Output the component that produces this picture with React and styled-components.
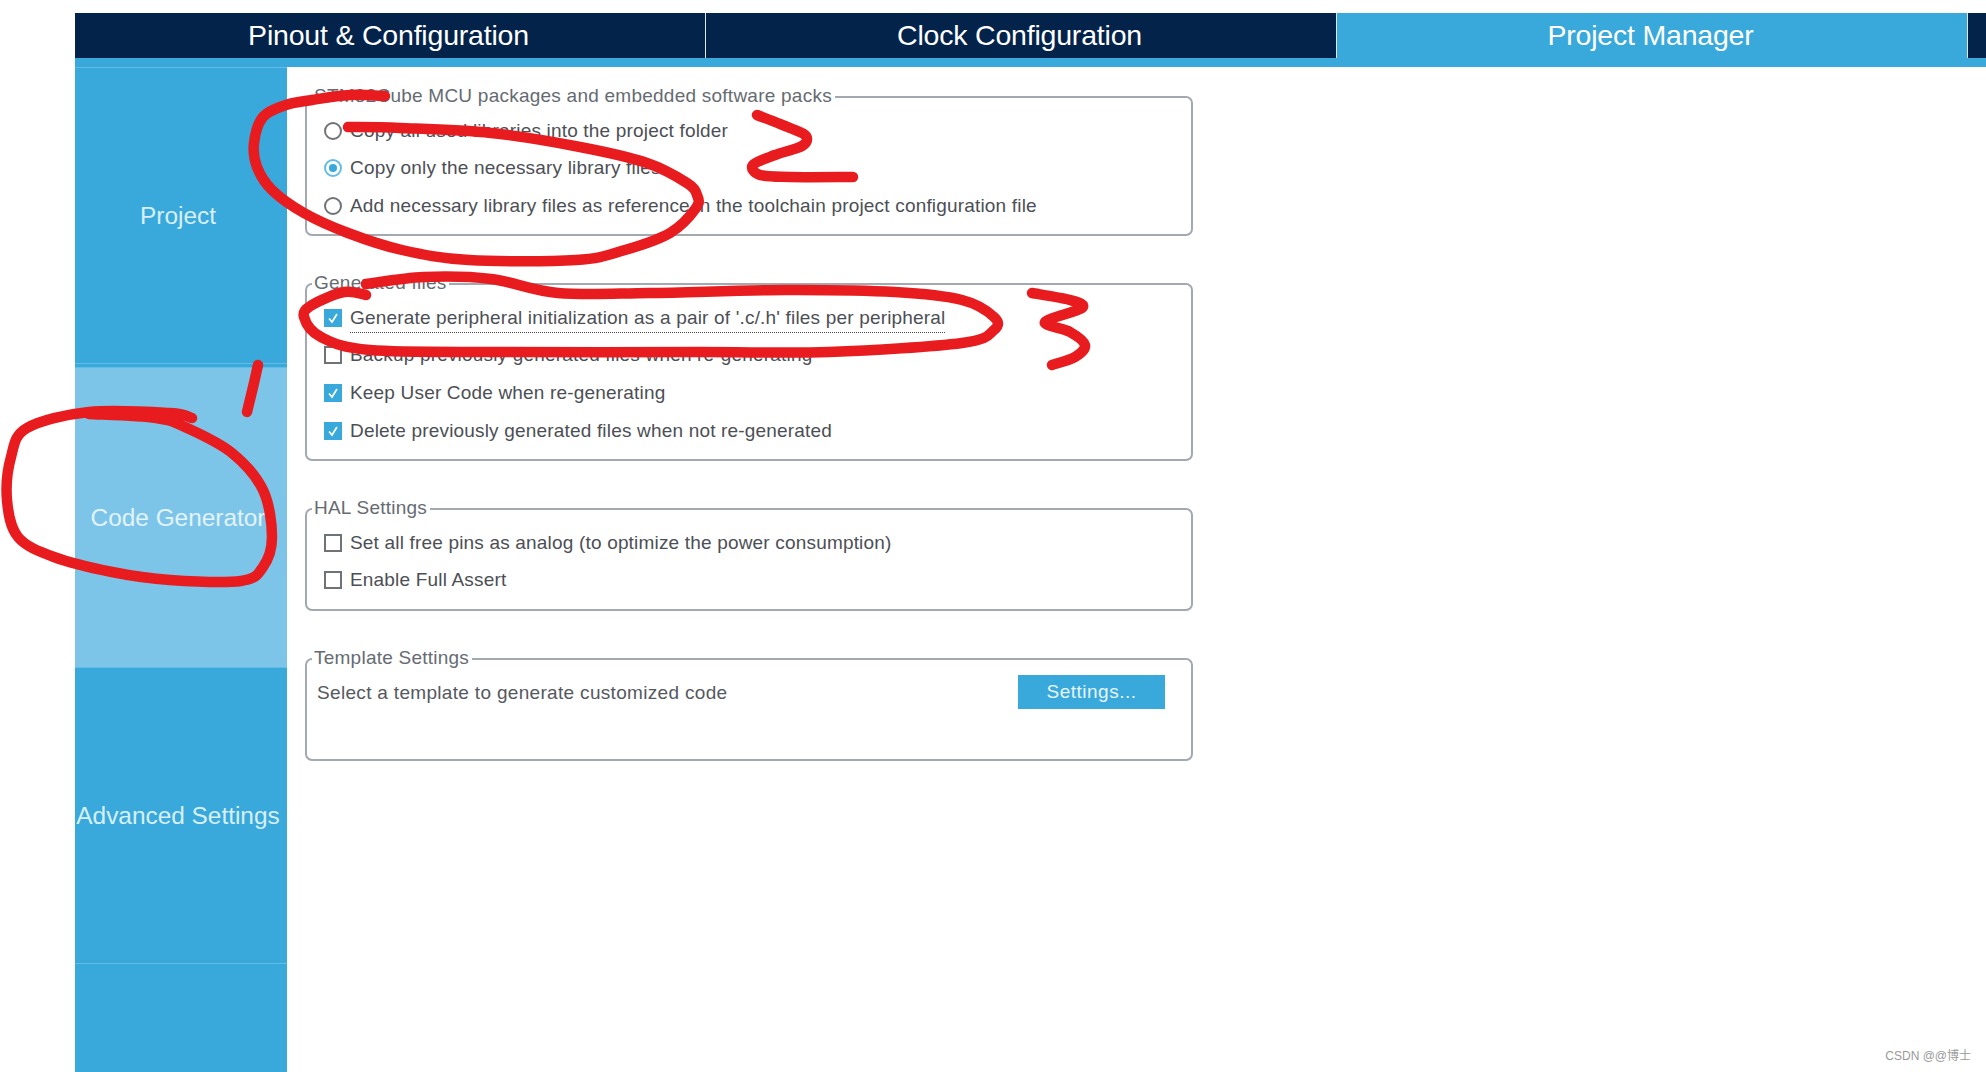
import React from 'react'
import styled, { createGlobalStyle } from 'styled-components'

const GlobalStyle = createGlobalStyle`
  html, body { margin: 0; padding: 0; background: #fff; }
  body { font-family: "Liberation Sans", Arial, sans-serif; }
`

const blue = '#39a9dc'
const navy = '#03234b'

const Page = styled.div`
  position: relative;
  width: 1986px;
  height: 1072px;
  overflow: hidden;
  padding: 13px 0 0 75px;
  box-sizing: border-box;
  background: #fff;
`

const TabBar = styled.div`
  display: flex;
  height: 45px;
  background: ${navy};
`

const Tab = styled.div`
  width: 631px;
  display: flex;
  align-items: center;
  justify-content: center;
  box-sizing: border-box;
  padding-right: 3px;
  border-right: 1px solid #dfe6ee;
  color: #fff;
  font-size: 28.5px;
  letter-spacing: -0.2px;
  background: ${p => (p.$active ? blue : navy)};
`

const Stripe = styled.div`
  height: 9px;
  background: ${blue};
`

const Main = styled.div`
  display: flex;
  height: 1005px;
`

const Sidebar = styled.div`
  width: 212px;
  flex: none;
  display: flex;
  flex-direction: column;
  background: ${blue};
`

const SideItem = styled.div`
  height: ${p => p.$h}px;
  flex: none;
  box-sizing: border-box;
  display: flex;
  align-items: center;
  justify-content: center;
  padding-right: 6px;
  border-top: 1px solid #62bce6;
  color: ${p => (p.$active ? '#e2f3fb' : '#d8effa')};
  background: ${p => (p.$active ? '#7cc5e9' : blue)};
  font-size: 24.4px;
  white-space: nowrap;
`

const SideGap = styled.div`
  height: 4px;
  flex: none;
  box-sizing: border-box;
  border-top: 1px solid #62bce6;
`

const Content = styled.div`
  padding: 29px 0 0 18px;
  display: flex;
  flex-direction: column;
  gap: 47px;
`

const Panel = styled.div`
  position: relative;
  box-sizing: border-box;
  width: 888px;
  height: ${p => p.$h}px;
  padding-top: 14px;
  border: 2px solid #a3a9b1;
  border-radius: 7px;
`

const Legend = styled.span`
  position: absolute;
  left: 5px;
  top: -13px;
  padding: 0 3px 0 2px;
  background: #fff;
  color: #666b72;
  font-size: 19px;
  letter-spacing: 0.24px;
  line-height: 22px;
  white-space: nowrap;
`

const Row = styled.div`
  display: flex;
  align-items: center;
  height: 37.6px;
  padding-left: 17px;
`

const OptionText = styled.span`
  margin-left: 8px;
  color: #4c4f55;
  font-size: 19px;
  letter-spacing: 0.18px;
  white-space: nowrap;
  ${p => p.$dotted && 'border-bottom: 1px dotted #444; line-height: 28px; margin-top: 1px;'}
`

const RadioMark = styled.span`
  width: 18px;
  height: 18px;
  flex: none;
  box-sizing: border-box;
  border-radius: 50%;
  border: 2px solid ${p => (p.$on ? '#62bce6' : '#6f7276')};
  display: flex;
  align-items: center;
  justify-content: center;
  &::after {
    content: '';
    width: 8px;
    height: 8px;
    border-radius: 50%;
    background: ${p => (p.$on ? blue : 'transparent')};
  }
`

const CheckMark = styled.span`
  width: 18px;
  height: 18px;
  flex: none;
  box-sizing: border-box;
  display: flex;
  align-items: center;
  justify-content: center;
  border: ${p => (p.$on ? 'none' : '2px solid #6f7276')};
  background: ${p => (p.$on ? blue : '#fff')};
`

const TemplateRow = styled.div`
  display: flex;
  align-items: center;
  justify-content: space-between;
  height: 34px;
  padding: 1px 26px 0 10px;
`

const TemplateText = styled.span`
  margin-top: 2px;
  color: #55585e;
  font-size: 19px;
  letter-spacing: 0.32px;
  white-space: nowrap;
`

const SettingsButton = styled.div`
  width: 147px;
  height: 34px;
  display: flex;
  align-items: center;
  justify-content: center;
  background: ${blue};
  color: #e6f5fc;
  font-size: 19px;
  letter-spacing: 0.5px;
`

const Scribbles = styled.svg`
  position: absolute;
  left: 0;
  top: 0;
  pointer-events: none;
`

const Watermark = styled.span`
  position: absolute;
  right: 15px;
  bottom: 9px;
  color: #9a9a9a;
  font-size: 12px;
  font-family: "Liberation Sans", "Noto Sans CJK SC", sans-serif;
`

// smooth line through the hand drawn points
const smooth = pts => {
  let d = `M${pts[0][0]} ${pts[0][1]}`
  for (let i = 0; i < pts.length - 1; i++) {
    const p0 = pts[i - 1] || pts[i]
    const p1 = pts[i]
    const p2 = pts[i + 1]
    const p3 = pts[i + 2] || p2
    const c1x = p1[0] + (p2[0] - p0[0]) / 6
    const c1y = p1[1] + (p2[1] - p0[1]) / 6
    const c2x = p2[0] - (p3[0] - p1[0]) / 6
    const c2y = p2[1] - (p3[1] - p1[1]) / 6
    d += ` C${c1x} ${c1y} ${c2x} ${c2y} ${p2[0]} ${p2[1]}`
  }
  return d
}

const strokes = [
  // ring round the radios
  [[385, 96], [350, 95], [312, 100], [286, 105], [263, 117], [254, 143], [257, 167], [272, 190], [304, 213], [348, 233], [402, 250], [469, 260], [576, 260], [625, 250], [670, 233], [696, 208], [697, 195], [687, 183], [647, 163], [580, 147], [491, 133], [400, 128], [348, 127]],
  // 2
  [[757, 115], [790, 128], [806, 136], [802, 146], [775, 155], [753, 165], [760, 175], [790, 177], [853, 177]],
  // ring round the first checkbox
  [[366, 295], [344, 292], [312, 305], [304, 317], [321, 337], [370, 350], [500, 352], [700, 352], [829, 352], [962, 343], [994, 330], [994, 317], [962, 300], [895, 292], [784, 290], [650, 293], [558, 293], [491, 279], [424, 277], [366, 284]],
  // 3
  [[1032, 293], [1070, 300], [1082, 308], [1045, 322], [1070, 332], [1085, 345], [1075, 357], [1052, 365]],
  // 1
  [[258, 365], [254, 383], [247, 412]],
  // ring round code generator
  [[192, 418], [170, 413], [89, 412], [27, 428], [11, 457], [7, 500], [18, 537], [54, 557], [112, 572], [170, 580], [241, 581], [263, 567], [272, 537], [263, 490], [232, 453], [187, 428], [156, 418], [89, 414]],
]

const Tick = () => (
  <svg width="12" height="12" viewBox="0 0 12 12">
    <path d="M2 6.5 L5 10 L10 2" fill="none" stroke="#fff" strokeWidth="1.7" />
  </svg>
)

const Radio = ({ on, children }) => (
  <Row>
    <RadioMark $on={on} />
    <OptionText>{children}</OptionText>
  </Row>
)

const Check = ({ on, dotted, children }) => (
  <Row>
    <CheckMark $on={on}>{on && <Tick />}</CheckMark>
    <OptionText $dotted={dotted}>{children}</OptionText>
  </Row>
)

const App = () => (
  <Page>
    <GlobalStyle />
    <TabBar>
      <Tab>Pinout &amp; Configuration</Tab>
      <Tab>Clock Configuration</Tab>
      <Tab $active>Project Manager</Tab>
    </TabBar>
    <Stripe />
    <Main>
      <Sidebar>
        <SideItem $h={296}>Project</SideItem>
        <SideGap />
        <SideItem $h={300} $active>Code Generator</SideItem>
        <SideItem $h={296}>Advanced Settings</SideItem>
        <SideGap />
      </Sidebar>
      <Content>
        <Panel $h={140}>
          <Legend>STM32Cube MCU packages and embedded software packs</Legend>
          <Radio>Copy all used libraries into the project folder</Radio>
          <Radio on>Copy only the necessary library files</Radio>
          <Radio>Add necessary library files as reference in the toolchain project configuration file</Radio>
        </Panel>
        <Panel $h={178}>
          <Legend>Generated files</Legend>
          <Check on dotted>Generate peripheral initialization as a pair of '.c/.h' files per peripheral</Check>
          <Check>Backup previously generated files when re-generating</Check>
          <Check on>Keep User Code when re-generating</Check>
          <Check on>Delete previously generated files when not re-generated</Check>
        </Panel>
        <Panel $h={103}>
          <Legend>HAL Settings</Legend>
          <Check>Set all free pins as analog (to optimize the power consumption)</Check>
          <Check>Enable Full Assert</Check>
        </Panel>
        <Panel $h={103}>
          <Legend>Template Settings</Legend>
          <TemplateRow>
            <TemplateText>Select a template to generate customized code</TemplateText>
            <SettingsButton>Settings...</SettingsButton>
          </TemplateRow>
        </Panel>
      </Content>
    </Main>
    <Scribbles width="1986" height="1072" viewBox="0 0 1986 1072">
      {strokes.map((pts, i) => (
        <path key={i} d={smooth(pts)} fill="none" stroke="#e81c1f" strokeWidth="10.5" strokeLinecap="round" strokeLinejoin="round" />
      ))}
    </Scribbles>
    <Watermark>CSDN @@博士</Watermark>
  </Page>
)

export default App
